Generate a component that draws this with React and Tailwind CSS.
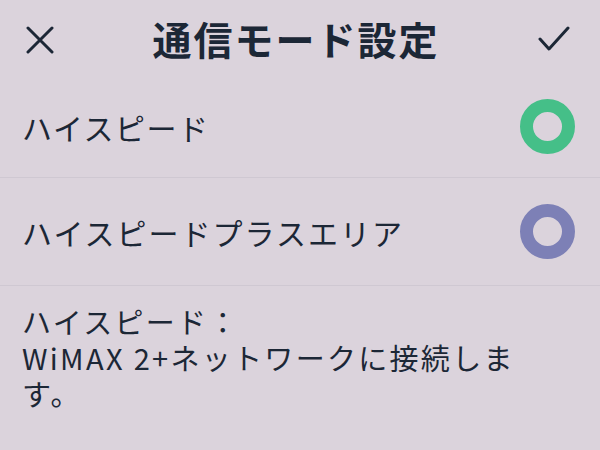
import React from "react";

const Ring = ({ color }) => (
  <div className={`w-[55px] h-[55px] rounded-full border-[13px] ${color}`} />
);

const App = () => {
  return (
    <div
      className="w-[600px] h-[450px] bg-[#dbd3dc] text-[#1c2736] overflow-hidden flex flex-col"
      style={{ fontFamily: '"Noto Sans CJK JP", "Noto Sans", sans-serif' }}
    >
      {/* header */}
      <div className="h-[76px] flex items-center justify-between pl-[26px] pr-[30px]">
        <svg width="28" height="28" viewBox="0 0 28 28" className="mt-[4px]">
          <path d="M2 2 L26 26 M26 2 L2 26" stroke="#1c2736" strokeWidth="3" strokeLinecap="round" />
        </svg>
        <h1 className="text-[39px] font-bold tracking-[2px] leading-none">通信モード設定</h1>
        <svg width="32" height="26" viewBox="0 0 32 26" className="mt-[2px]">
          <path d="M2 13 L11 23 L30 2" fill="none" stroke="#1c2736" strokeWidth="3" strokeLinecap="round" strokeLinejoin="round" />
        </svg>
      </div>

      {/* options */}
      <div className="h-[102px] flex items-center justify-between pl-[22px] pr-[25px] border-b border-[#cfc8d2]">
        <span className="text-[30px] tracking-[1.5px] leading-none">ハイスピード</span>
        <Ring color="border-[#45bf88]" />
      </div>
      <div className="h-[108px] flex items-center justify-between pl-[22px] pr-[25px] border-b border-[#cfc8d2]">
        <span className="text-[30px] tracking-[2px] leading-none">ハイスピードプラスエリア</span>
        <Ring color="border-[#7d80b6]" />
      </div>

      {/* description */}
      <div className="pl-[22px] pt-[21px] text-[29px] tracking-[2.3px] leading-none flex flex-col gap-[7px]">
        <p>ハイスピード：</p>
        <p>WiMAX 2+ネットワークに接続しま</p>
        <p>す。</p>
      </div>
    </div>
  );
};

export default App;
